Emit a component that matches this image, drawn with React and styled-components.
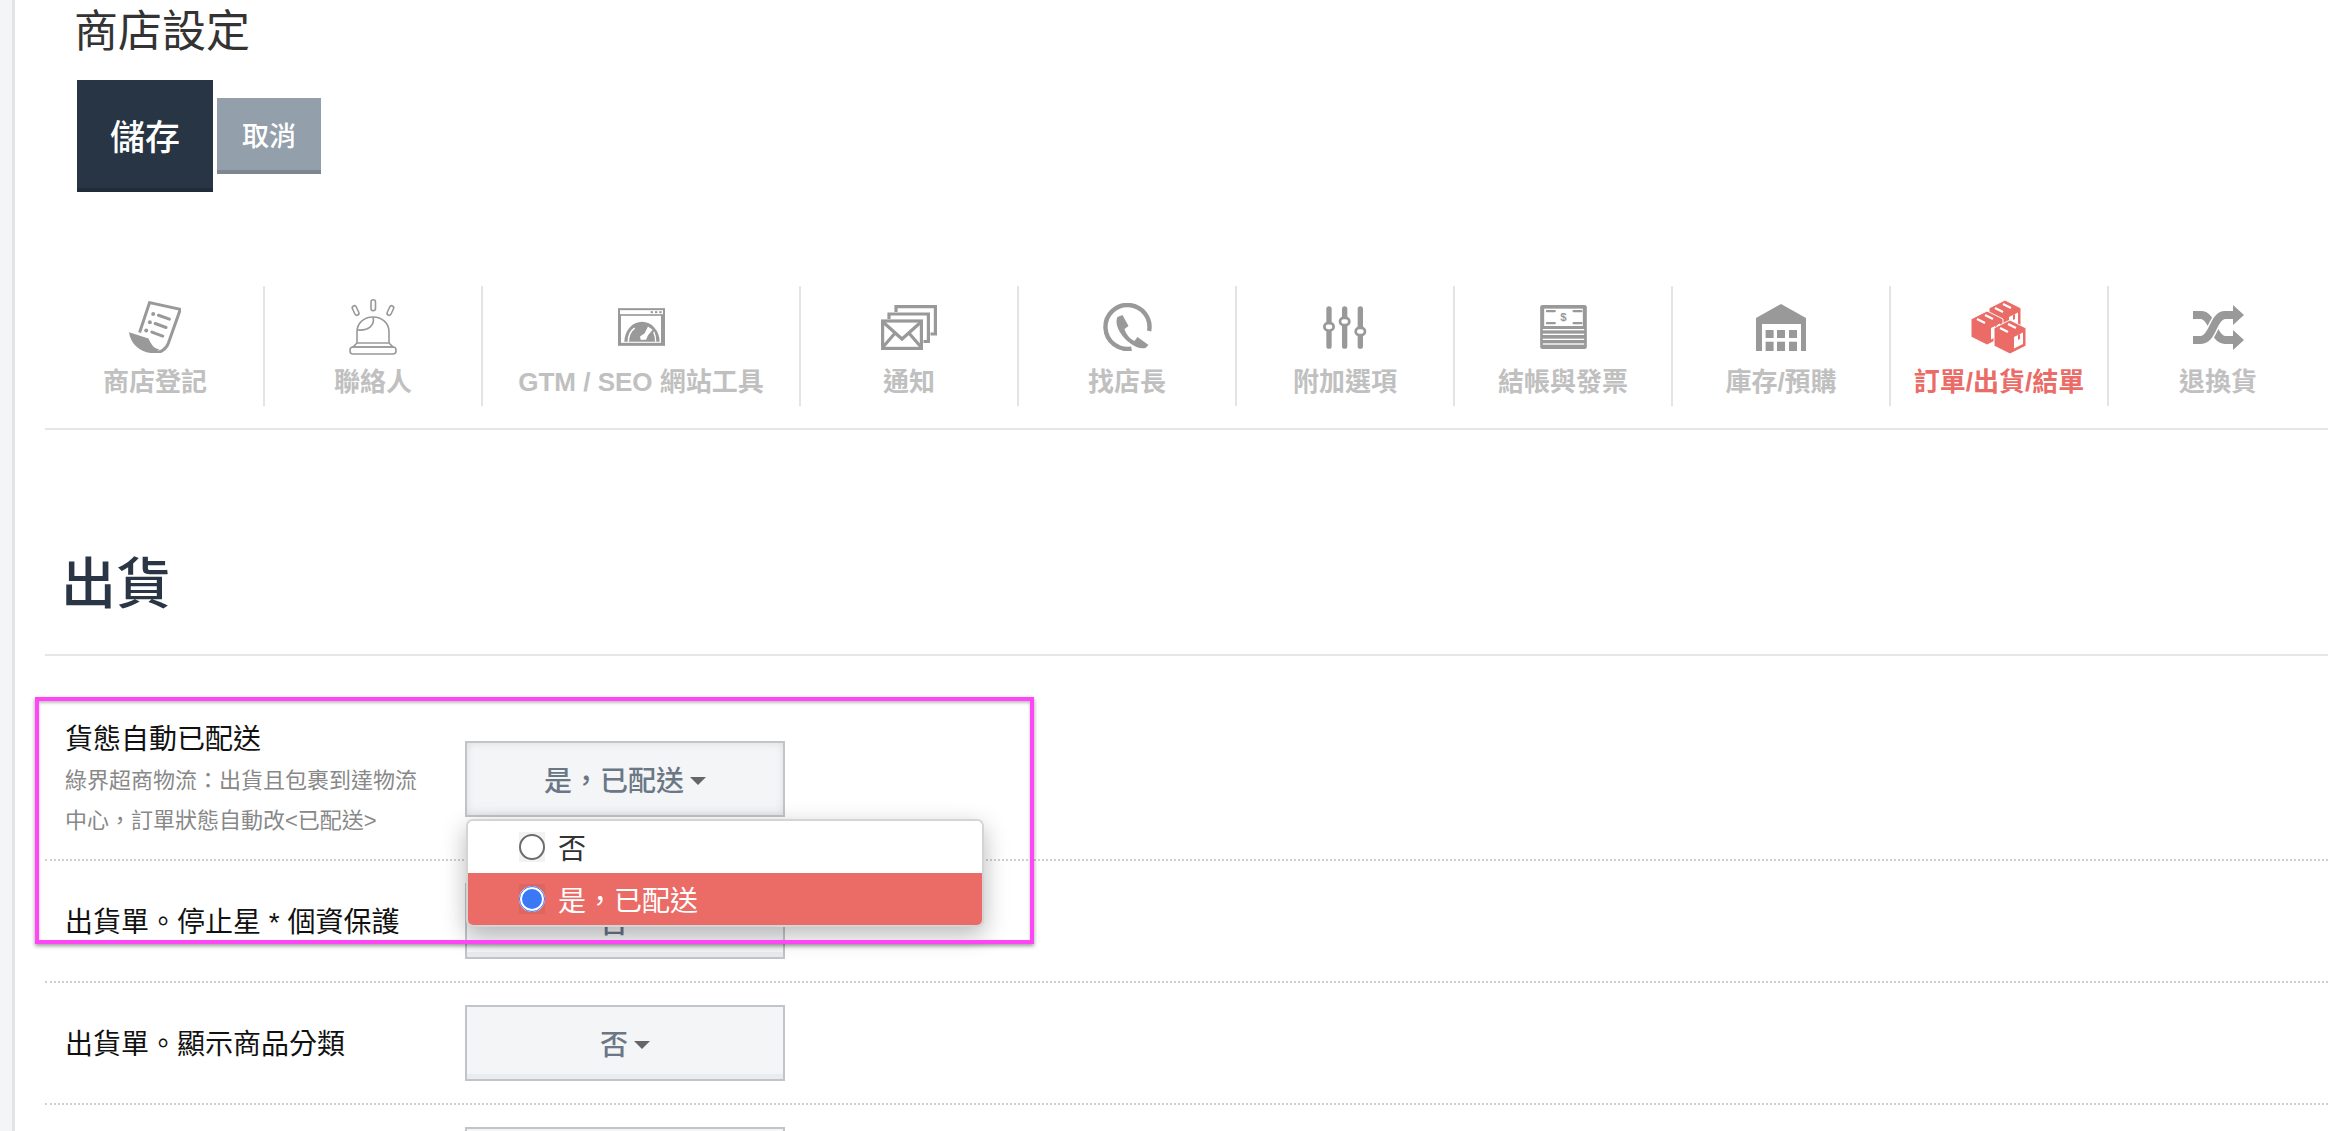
import React from "react";
import styled, { createGlobalStyle } from "styled-components";

const Global = createGlobalStyle`
  html, body { margin: 0; padding: 0; background: #fff; height: 1131px; overflow: hidden; }
  body, button, input { font-family: "Liberation Sans", "Noto Sans CJK TC", sans-serif; }
  * { box-sizing: border-box; }
`;

const Page = styled.div`
  position: relative;
  display: flex;
  width: 2328px;
  height: 1131px;
  overflow: hidden;
`;
const Strip = styled.aside`
  flex: 0 0 15px;
  background: #f4f5f7;
  border-right: 3px solid #e4e4e4;
`;
const Main = styled.main`
  flex: 1;
  min-width: 0;
  padding-left: 30px;
`;
const Header = styled.header`
  padding-left: 32px;
`;
const Title = styled.h1`
  margin: 0 0 16px -3px;
  font-size: 44px;
  line-height: 64px;
  font-weight: 400;
  color: #333;
`;
const Actions = styled.div`
  display: flex;
  align-items: center;
  gap: 4px;
`;
const SaveButton = styled.button`
  width: 136px;
  height: 112px;
  padding: 0;
  border: 0;
  border-bottom: 4px solid #212c39;
  background: #283545;
  color: #fff;
  font-size: 35px;
  font-weight: 500;
`;
const CancelButton = styled.button`
  width: 104px;
  height: 76px;
  padding: 0;
  border: 0;
  border-bottom: 4px solid #7d8792;
  background: #939fab;
  color: #fff;
  font-size: 27px;
  font-weight: 500;
`;
const Tabs = styled.nav`
  display: flex;
  margin-top: 94px;
  padding: 0 0 22px 2px;
  border-bottom: 2px solid #e6e6e6;
`;
const Tab = styled.a`
  flex: 0 0 ${(p) => (p.$wide ? "318px" : "218px")};
  height: 120px;
  padding-top: 8px;
  display: flex;
  flex-direction: column;
  align-items: center;
  border-right: ${(p) => (p.$last ? "0" : "2px solid #e4e4e4")};
  color: ${(p) => (p.$active ? "#eb6b66" : "#c0c0c0")};
`;
const IconSlot = styled.div`
  height: 66px;
  display: flex;
  align-items: center;
  justify-content: center;
  color: ${(p) => (p.$active ? "#eb6b66" : "#999")};
  svg { display: block; }
`;
const TabLabel = styled.span`
  margin-top: 2px;
  font-size: 26px;
  line-height: 40px;
  font-weight: 700;
  white-space: nowrap;
`;
const SectionHeading = styled.h2`
  margin: 114px 0 0;
  padding: 0 0 30px 16px;
  font-size: 55px;
  line-height: 80px;
  font-weight: 500;
  color: #2a3545;
  border-bottom: 2px solid #e6e6e6;
`;
const Rows = styled.div`
  margin-top: 62px;
`;
const Row = styled.div`
  display: flex;
  align-items: ${(p) => (p.$top ? "flex-start" : "center")};
  height: ${(p) => (p.$top ? "143px" : "122px")};
  padding-left: 20px;
  border-bottom: 2px dotted #cfcfcf;
`;
const LabelCol = styled.div`
  flex: 0 0 400px;
`;
const Label = styled.div`
  padding-top: 2px;
  margin-bottom: -2px;
  font-size: 28px;
  line-height: 40px;
  color: #111;
`;
const Hint = styled.div`
  width: 360px;
  margin-top: 3px;
  font-size: 22px;
  line-height: 40px;
  color: #888;
`;
const SelectWrap = styled.div`
  position: relative;
  width: 320px;
  margin-top: ${(p) => (p.$top ? "23px" : "0")};
`;
const SelectButton = styled.button`
  display: flex;
  align-items: center;
  justify-content: center;
  gap: 6px;
  width: 320px;
  height: 76px;
  padding: 0;
  border: 2px solid #c1c5ca;
  background: #f4f5f7;
  color: #6b7785;
  font-size: 28px;
  font-weight: 500;
  box-shadow: ${(p) =>
    p.$open ? "inset 0 0 8px rgba(0,0,0,0.10)" : "inset 0 -5px 0 #e9ebee"};
`;
const Caret = styled.span`
  width: 0;
  height: 0;
  margin-top: 3px;
  border-left: 8px solid transparent;
  border-right: 8px solid transparent;
  border-top: 8px solid #666;
`;
const Menu = styled.ul`
  position: absolute;
  z-index: 2;
  top: 78px;
  left: 1px;
  width: 518px;
  margin: 0;
  padding: 0;
  list-style: none;
  background: #fff;
  border: 2px solid #d4d4d4;
  border-radius: 7px;
  overflow: hidden;
  box-shadow: 0 8px 24px rgba(0, 0, 0, 0.28);
`;
const Option = styled.li`
  display: flex;
  align-items: center;
  gap: 13px;
  height: 52px;
  padding-left: 51px;
  font-size: 28px;
  color: ${(p) => (p.$selected ? "#fff" : "#333")};
  background: ${(p) => (p.$selected ? "#eb6b66" : "#fff")};
`;
const RadioBox = styled.span`
  display: flex;
  width: 26px;
  height: 30px;
  align-items: center;
  background: rgba(0, 0, 0, 0.05);
`;
const Radio = styled.input`
  appearance: none;
  flex: 0 0 26px;
  width: 26px;
  height: 26px;
  margin: 0;
  border-radius: 50%;
  border: ${(p) => (p.checked ? "3px solid #fff" : "2px solid #6c6c6c")};
  background: ${(p) => (p.checked ? "#3b78f6" : "#fff")};
  outline: ${(p) => (p.checked ? "1px solid #3b78f6" : "0")};
  outline-offset: -1px;
`;
const Annotation = styled.div`
  position: absolute;
  z-index: 3;
  left: 35px;
  top: 697px;
  width: 999px;
  height: 247px;
  border: 4px solid #ff45f6;
  box-shadow: 0 2px 4px rgba(0, 0, 0, 0.4), inset 0 2px 3px rgba(0, 0, 0, 0.25);
  pointer-events: none;
`;

const PaperIcon = () => (
  <svg width="52" height="52" viewBox="113 33 157 157">
    <path d="M145 128 L175 38 L268 58 L232 160 C225 180 205 192 190 186" fill="none" stroke="currentColor" strokeWidth="9" />
    <path d="M113 127 L172 146 C180 165 190 178 205 178 L190 191 C150 190 118 165 113 127Z" fill="currentColor" />
    <g fill="currentColor">
      <circle cx="186" cy="72" r="6" />
      <circle cx="176" cy="97" r="6" />
      <circle cx="165" cy="122" r="6" />
    </g>
    <path d="M202 76 L235 88 M192 101 L225 113 M182 127 L215 139" stroke="currentColor" strokeWidth="9" strokeLinecap="round" />
  </svg>
);
const AlarmIcon = () => (
  <svg width="48" height="56" viewBox="0 0 48 56" fill="none" stroke="currentColor" strokeWidth="1.6">
    <rect x="22" y="0.8" width="4.5" height="11" rx="2.2" />
    <rect x="4.5" y="6.5" width="4.2" height="10" rx="2.1" transform="rotate(-25 6.6 11.5)" />
    <rect x="39.3" y="6.5" width="4.2" height="10" rx="2.1" transform="rotate(25 41.4 11.5)" />
    <path d="M8 44 V33 C8 24 15 18 24 18 C33 18 40 24 40 33 V44" />
    <path d="M24 18 C26 26 20 32 8.5 31" />
    <path d="M8 44 H40 L44 48 H4 Z" />
    <rect x="1" y="48" width="46" height="7" rx="3" />
  </svg>
);
const GlobeIcon = () => (
  <svg width="47" height="38" viewBox="172 57 141 113">
    <rect x="172" y="57" width="141" height="113" fill="currentColor" />
    <rect x="178" y="63" width="129" height="12" fill="#fff" />
    <g fill="currentColor">
      <rect x="270" y="66" width="7" height="6" />
      <rect x="283" y="66" width="7" height="6" />
      <rect x="296" y="66" width="7" height="6" />
    </g>
    <rect x="181" y="80" width="120" height="81" fill="#fff" />
    <path d="M191 158 A53 60 0 0 1 297 158 Z" fill="currentColor" />
    <path d="M203 158 C203 140 210 125 222 117" fill="none" stroke="#fff" strokeWidth="5" />
    <path d="M285 158 C285 145 283 136 279 128" fill="none" stroke="#fff" strokeWidth="4" />
    <path d="M262 112 L276 122 L262 138 L256 152 L240 152 L238 142 L252 132Z" fill="#fff" />
  </svg>
);
const MailIcon = () => (
  <svg width="56" height="45" viewBox="0 0 56 45" fill="none" stroke="currentColor" strokeWidth="3.2">
    <path d="M15 7 V1.6 H54.4 V29 H49.5" />
    <path d="M8 14 V9 H47.4 V36.5 H42.5" />
    <rect x="1.6" y="16" width="38.8" height="27.4" fill="#fff" />
    <path d="M2 17 L21 34 L40 17 M2 42 L15 27 M40 42 L27 27" />
  </svg>
);
const PhoneIcon = () => (
  <svg width="49" height="48" viewBox="0 0 48 48" fill="none">
    <path d="M28 45.6 A22 22 0 1 1 45.6 28" stroke="currentColor" strokeWidth="4.4" />
    <path d="M14 14 L19 12 L25 23 L21 26 C22 30 26 36 31 38 L34 34 L45 42 L42 45 C33 47 22 38 17 30 C13 24 12 18 14 14Z" fill="currentColor" />
  </svg>
);
const SlidersIcon = () => (
  <svg width="44" height="43" viewBox="100 50 132 128" fill="#fff" stroke="currentColor">
    <path d="M118 58 V170 M165 58 V170 M212 58 V170" strokeWidth="16" strokeLinecap="round" />
    <rect x="104" y="101" width="28" height="22" rx="11" strokeWidth="8" />
    <rect x="151" y="85" width="28" height="22" rx="11" strokeWidth="8" />
    <rect x="198" y="115" width="28" height="22" rx="11" strokeWidth="8" />
  </svg>
);
const MoneyIcon = () => (
  <svg width="47" height="44" viewBox="748 46 140 132">
    <rect x="748" y="46" width="140" height="132" rx="7" fill="currentColor" />
    <rect x="760" y="57" width="116" height="52" fill="#fff" />
    <g fill="currentColor">
      <rect x="765" y="61" width="30" height="7" rx="3" />
      <rect x="845" y="61" width="30" height="7" rx="3" />
      <rect x="765" y="97" width="30" height="7" rx="3" />
      <rect x="845" y="97" width="30" height="7" rx="3" />
    </g>
    <text x="818" y="95" textAnchor="middle" fontSize="34" fontWeight="700" fill="currentColor">$</text>
    <g fill="#fff">
      <rect x="756" y="118" width="124" height="4" />
      <rect x="756" y="132" width="124" height="4" />
      <rect x="756" y="147" width="124" height="4" />
      <rect x="756" y="161" width="124" height="4" />
    </g>
  </svg>
);
const WarehouseIcon = () => (
  <svg width="50" height="47" viewBox="0 0 50 47">
    <path d="M0 14 L25 0 L50 14 V47 H0Z" fill="currentColor" />
    <rect x="6" y="20" width="39" height="27" fill="#fff" />
    <g fill="currentColor">
      <rect x="9.6" y="26" width="8" height="8" />
      <rect x="21" y="26" width="8" height="8" />
      <rect x="33" y="26" width="8" height="8" />
      <rect x="9.6" y="37.7" width="8" height="9.3" />
      <rect x="21" y="37.7" width="8" height="9.3" />
      <rect x="33" y="37.7" width="8" height="9.3" />
    </g>
  </svg>
);
const BoxShape = ({ x, y }) => (
  <g transform={`translate(${x} ${y})`}>
    <path d="M16 0 L32 8 V26 L16 34 L0 26 V8Z" fill="currentColor" stroke="#fff" strokeWidth="1" strokeLinejoin="round" />
    <path d="M6 8 L14 12 M14 4 L22 8" stroke="#fff" strokeWidth="2.2" />
    <path d="M20 17 L29 12.5 V24 L20 28.5Z" fill="#fff" />
    <path d="M24 15 V20 L26 19 V14Z" fill="currentColor" />
  </g>
);
const BoxesIcon = () => (
  <svg width="56" height="54" viewBox="0 0 56 54">
    <BoxShape x={18} y={0} />
    <BoxShape x={0} y={11} />
    <BoxShape x={23} y={20} />
  </svg>
);
const ShuffleIcon = () => (
  <svg width="51" height="45" viewBox="0 0 51 45" fill="none">
    <path d="M0 10 H8 C20 10 20 35 32 35 H41" stroke="currentColor" strokeWidth="8" />
    <path d="M8 35 C20 35 20 10 32 10" stroke="#fff" strokeWidth="11" />
    <path d="M0 35 H8 C20 35 20 10 32 10 H41" stroke="currentColor" strokeWidth="8" />
    <path d="M40 0 L51 10 L40 20Z M40 25 L51 35 L40 45Z" fill="currentColor" />
  </svg>
);

const tabs = [
  { label: "商店登記", Icon: PaperIcon },
  { label: "聯絡人", Icon: AlarmIcon },
  { label: "GTM / SEO 網站工具", Icon: GlobeIcon, wide: true },
  { label: "通知", Icon: MailIcon },
  { label: "找店長", Icon: PhoneIcon },
  { label: "附加選項", Icon: SlidersIcon },
  { label: "結帳與發票", Icon: MoneyIcon },
  { label: "庫存/預購", Icon: WarehouseIcon },
  { label: "訂單/出貨/結單", Icon: BoxesIcon, active: true },
  { label: "退換貨", Icon: ShuffleIcon, last: true },
];

const Select = ({ value, top, open }) => (
  <SelectWrap $top={top}>
    <SelectButton $open={open}>
      {value}
      <Caret />
    </SelectButton>
    {open && (
      <Menu>
        <Option>
          <RadioBox>
            <Radio type="radio" name="delivered" readOnly checked={false} />
          </RadioBox>
          否
        </Option>
        <Option $selected>
          <RadioBox>
            <Radio type="radio" name="delivered" readOnly checked />
          </RadioBox>
          是，已配送
        </Option>
      </Menu>
    )}
  </SelectWrap>
);

export default function App() {
  return (
    <Page>
      <Global />
      <Strip />
      <Main>
        <Header>
          <Title>商店設定</Title>
          <Actions>
            <SaveButton>儲存</SaveButton>
            <CancelButton>取消</CancelButton>
          </Actions>
        </Header>
        <Tabs>
          {tabs.map(({ label, Icon, wide, active, last }) => (
            <Tab key={label} $wide={wide} $active={active} $last={last}>
              <IconSlot $active={active}>
                <Icon />
              </IconSlot>
              <TabLabel>{label}</TabLabel>
            </Tab>
          ))}
        </Tabs>
        <SectionHeading>出貨</SectionHeading>
        <Rows>
          <Row $top>
            <LabelCol>
              <Label>貨態自動已配送</Label>
              <Hint>綠界超商物流：出貨且包裹到達物流中心，訂單狀態自動改&lt;已配送&gt;</Hint>
            </LabelCol>
            <Select value="是，已配送" top open />
          </Row>
          <Row>
            <LabelCol>
              <Label>出貨單。停止星 * 個資保護</Label>
            </LabelCol>
            <Select value="否" />
          </Row>
          <Row>
            <LabelCol>
              <Label>出貨單。顯示商品分類</Label>
            </LabelCol>
            <Select value="否" />
          </Row>
          <Row>
            <LabelCol />
            <Select value="" />
          </Row>
        </Rows>
      </Main>
      <Annotation />
    </Page>
  );
}
